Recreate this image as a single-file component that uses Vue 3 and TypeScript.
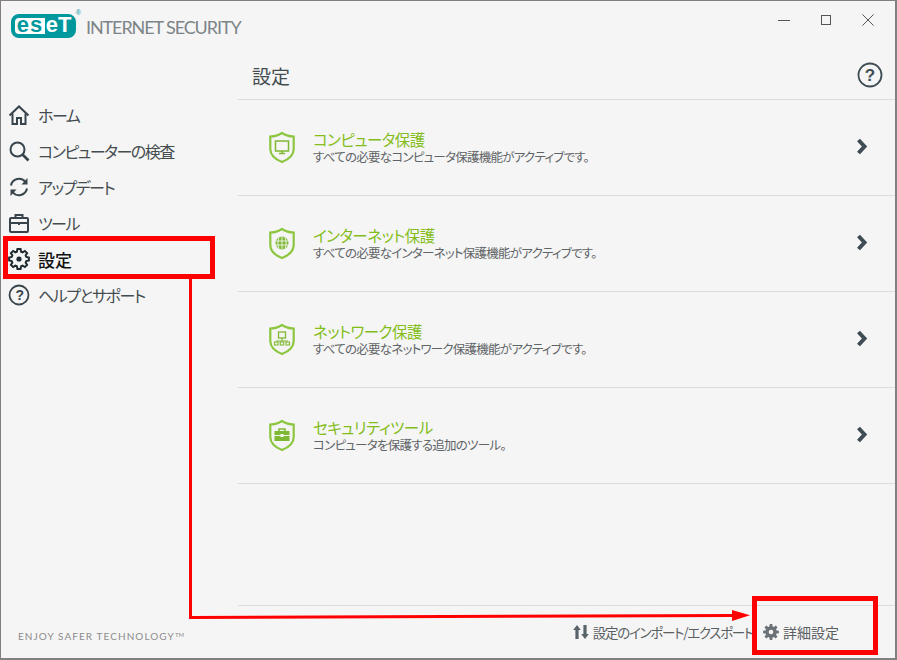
<script setup lang="ts">
function gearPath(cx: number, cy: number, ro: number, ri: number, n: number): string {
  const pts: string[] = []
  const step = (Math.PI * 2) / n
  for (let i = 0; i < n; i++) {
    const a = i * step - Math.PI / 2
    const list: [number, number][] = [
      [ri, a - step * 0.36],
      [ro, a - step * 0.2],
      [ro, a + step * 0.2],
      [ri, a + step * 0.36],
    ]
    for (const [r, t] of list) {
      pts.push(`${(cx + r * Math.cos(t)).toFixed(2)} ${(cy + r * Math.sin(t)).toFixed(2)}`)
    }
  }
  return 'M' + pts.join('L') + 'Z'
}
const navGear = gearPath(11, 11, 10, 7.6, 8)
const footGear = gearPath(8, 8, 8, 5.8, 8)

const nav = [
  { id: 'home', label: 'ホーム' },
  { id: 'scan', label: 'コンピューターの検査' },
  { id: 'update', label: 'アップデート' },
  { id: 'tools', label: 'ツール' },
  { id: 'setup', label: '設定', active: true },
  { id: 'help', label: 'ヘルプとサポート' },
]
const rows = [
  { id: 'pc', title: 'コンピュータ保護', sub: 'すべての必要なコンピュータ保護機能がアクティブです。' },
  { id: 'net', title: 'インターネット保護', sub: 'すべての必要なインターネット保護機能がアクティブです。' },
  { id: 'lan', title: 'ネットワーク保護', sub: 'すべての必要なネットワーク保護機能がアクティブです。' },
  { id: 'tool', title: 'セキュリティツール', sub: 'コンピュータを保護する追加のツール。' },
]
</script>

<template>
  <div class="win">
    <header class="bar">
      <div class="logo">
        <span class="pill"><span class="es">es</span><span class="et">eT</span></span>
        <span class="reg">®</span>
      </div>
      <span class="prod">INTERNET SECURITY</span>
      <div class="ctrls">
        <svg width="12" height="12" viewBox="0 0 12 12"><path d="M0 6.5H12" stroke="#555" /></svg>
        <svg width="12" height="12" viewBox="0 0 12 12"><rect x="1.5" y="1.5" width="9" height="9" fill="none" stroke="#555" /></svg>
        <svg width="12" height="12" viewBox="0 0 12 12"><path d="M.5 .5L11.5 11.5M11.5 .5L.5 11.5" stroke="#555" /></svg>
      </div>
    </header>
    <div class="body">
      <aside class="side">
        <nav class="nav">
          <div v-for="n in nav" :key="n.id" class="item" :class="{ active: n.active }">
            <svg class="ico" width="22" height="22" viewBox="0 0 22 22" fill="none" stroke="#38444b" stroke-width="2">
              <template v-if="n.id === 'home'">
                <path d="M1.5 11.5L11 2.5L20.5 11.5" />
                <path d="M4.5 9.5V20H9V14H13V20H17.5V9.5" />
              </template>
              <template v-else-if="n.id === 'scan'">
                <circle cx="9.5" cy="9.5" r="7" />
                <path d="M14.5 14.5L20.5 20.5" stroke-width="2.6" />
              </template>
              <template v-else-if="n.id === 'update'">
                <path d="M3 9.5A8.2 8.2 0 0 1 17.5 6" />
                <path d="M19 12.5A8.2 8.2 0 0 1 4.5 16" />
                <path d="M19.5 2V8.5H13.5Z" fill="#38444b" stroke="none" />
                <path d="M2.5 20V13.5H8.500Z" fill="#38444b" stroke="none" />
              </template>
              <template v-else-if="n.id === 'tools'">
                <rect x="2" y="6" width="18" height="14" rx="1" />
                <path d="M7.500 6V3H14.500V6M2 11H20" />
                <path d="M11 10V13" />
              </template>
              <template v-else-if="n.id === 'setup'">
                <path :d="navGear" stroke="#1f2a30" />
                <circle cx="11" cy="11" r="2.600" fill="#1f2a30" stroke="none" />
              </template>
              <template v-else>
                <circle cx="11" cy="11" r="9.500" stroke-width="1.800" />
                <text x="11" y="16" text-anchor="middle" class="q" font-size="14" stroke="none" fill="#38444b">?</text>
              </template>
            </svg>
            <span>{{ n.label }}</span>
          </div>
        </nav>
        <div class="slogan">ENJOY SAFER TECHNOLOGY<sup>TM</sup></div>
      </aside>
      <main class="main">
        <div class="head">
          <h1>設定</h1>
          <svg width="26" height="26" viewBox="0 0 26 26" fill="none">
            <circle cx="13" cy="13" r="11.500" stroke="#3f4c54" stroke-width="1.800" />
            <text x="13" y="19" text-anchor="middle" class="q" font-size="17" font-weight="700" fill="#3f4c54">?</text>
          </svg>
        </div>
        <div class="list">
          <div v-for="r in rows" :key="r.id" class="row">
            <svg class="shield" width="28" height="33" viewBox="0 0 28 33" fill="none">
              <path d="M14 2C10.500 4.300 6 5.500 2.300 5.500V18C2.300 25 9 29 14 31C19 29 25.700 25 25.700 18V5.500C22 5.500 17.500 4.300 14 2Z" stroke="#8cc63f" stroke-width="2.200" />
              <template v-if="r.id === 'pc'">
                <rect x="7.500" y="10" width="13" height="10" stroke="#7fb832" stroke-width="1.500" />
                <path d="M11 22.500H17M14 20V22.500" stroke="#7fb832" stroke-width="1.500" />
              </template>
              <template v-else-if="r.id === 'net'">
                <circle cx="14" cy="16" r="6.500" fill="#7fb832" />
                <path d="M7.500 14H20.500M7.500 18H20.500M14 9.500V22.500M11 10.500C9.500 14 9.500 18 11 21.500M17 10.500C18.500 14 18.500 18 17 21.500" stroke="#f5f5f5" stroke-width=".9" />
              </template>
              <template v-else-if="r.id === 'lan'">
                <rect x="10.500" y="9" width="7" height="6" stroke="#7fb832" stroke-width="1.300" />
                <path d="M14 15V18M8 18H20" stroke="#7fb832" stroke-width="1.200" />
                <rect x="6.500" y="19" width="3.500" height="3" stroke="#7fb832" stroke-width="1.100" />
                <rect x="12.200" y="19" width="3.500" height="3" stroke="#7fb832" stroke-width="1.100" />
                <rect x="18" y="19" width="3.500" height="3" stroke="#7fb832" stroke-width="1.100" />
              </template>
              <template v-else>
                <path d="M11 12V10H17V12" stroke="#7fb832" stroke-width="1.500" />
                <rect x="6.500" y="12" width="15" height="4" fill="#7fb832" />
                <rect x="6.500" y="17" width="15" height="5" fill="#7fb832" />
                <rect x="12.500" y="15" width="3" height="3" fill="#f5f5f5" />
              </template>
            </svg>
            <div class="txt">
              <div class="title">{{ r.title }}</div>
              <div class="sub">{{ r.sub }}</div>
            </div>
            <svg class="chev" width="14" height="19" viewBox="0 0 14 19" fill="none">
              <path d="M3.500 3L9.500 9.500L3.500 16" stroke="#3f4c54" stroke-width="4" />
            </svg>
          </div>
        </div>
        <footer class="foot">
          <span class="act imp">
            <svg width="16" height="16" viewBox="0 0 16 16" fill="#59636a">
              <path d="M4 1L7.800 6H5.600V15H2.400V6H.2Z" />
              <path d="M12 15L8.200 10H10.400V1H13.600V10H15.800Z" />
            </svg>
            <span class="imp-label">設定のインポート/エクスポート</span>
          </span>
          <span class="act">
            <svg width="16" height="16" viewBox="0 0 16 16">
              <path :d="footGear" fill="#6a7277" fill-rule="evenodd" />
              <circle cx="8" cy="8" r="2.300" fill="#f5f5f5" />
            </svg>
            詳細設定
          </span>
        </footer>
      </main>
    </div>
    <div class="mark m1"></div>
    <div class="mark m2"></div>
    <svg class="arrow" width="897" height="660" viewBox="0 0 897 660" fill="none">
      <path d="M190.500 279V617.500L733 615.500" stroke="#f00" stroke-width="3" />
      <path d="M732 610L750 615.300L732 621Z" fill="#f00" />
    </svg>
  </div>
</template>

<style scoped>
.win {
  position: relative;
  width: 897px;
  height: 660px;
  box-sizing: border-box;
  border: 1px solid #808080;
  border-width: 1px 2px 2px 1px;
  background: #f5f5f5;
  display: flex;
  flex-direction: column;
  overflow: hidden;
  font-family: "Noto Sans CJK JP", "Noto Sans", sans-serif;
  font-feature-settings: "palt";
  color: #444;
}
.bar {
  height: 39px;
  display: flex;
  align-items: flex-start;
  flex: none;
}
.logo {
  position: relative;
  margin: 13px 0 0 10px;
  width: 65px;
  height: 24px;
}
.pill {
  display: flex;
  align-items: stretch;
  width: 65px;
  height: 24px;
  box-sizing: border-box;
  border: 4px solid #00979d;
  border-radius: 8px;
  background: #00979d;
  font-family: "Liberation Sans", sans-serif;
  font-weight: 700;
  font-size: 22px;
  line-height: 14px;
  font-feature-settings: normal;
}
.es {
  width: 30px;
  background: #fff;
  color: #00979d;
  text-align: center;
  border-radius: 4px 0 0 4px;
  letter-spacing: 1px;
}
.et {
  width: 27px;
  color: #fff;
  text-align: center;
  letter-spacing: 0;
}
.reg {
  position: absolute;
  top: -5px;
  right: -5px;
  font-size: 7px;
  line-height: 8px;
  color: #00979d;
  font-family: "Liberation Sans", sans-serif;
}
.prod {
  margin: 15px 0 0 10px;
  font-family: Lato, sans-serif;
  font-size: 18px;
  line-height: 22px;
  letter-spacing: -1.1px;
  color: #7c8488;
  font-feature-settings: normal;
}
.ctrls {
  margin: 13px 0 0 auto;
  padding-right: 21px;
  display: flex;
  gap: 30px;
}
.body {
  flex: 1;
  display: flex;
  min-height: 0;
}
.side {
  width: 237px;
  flex: none;
  display: flex;
  flex-direction: column;
  padding-top: 57px;
  box-sizing: border-box;
}
.nav {
  flex: 1;
}
.item {
  height: 36px;
  display: flex;
  align-items: center;
  gap: 8px;
  padding-left: 7px;
  font-size: 16px;
  letter-spacing: -1.5px;
  color: #444c50;
}
.item.active {
  color: #111;
  font-size: 17px;
  font-weight: 500;
  letter-spacing: 0;
}
.ico {
  flex: none;
}
.q {
  font-family: "Liberation Sans", sans-serif;
  font-weight: 700;
}
.slogan {
  margin: 0 0 15px 17px;
  font-family: Lato, sans-serif;
  font-size: 10px;
  line-height: 14px;
  letter-spacing: 1.07px;
  color: #8c8c8c;
  font-feature-settings: normal;
}
.slogan sup {
  font-size: 6px;
  letter-spacing: 0;
  vertical-align: 3px;
  line-height: 0;
}
.main {
  flex: 1;
  display: flex;
  flex-direction: column;
  min-width: 0;
}
.head {
  height: 60px;
  flex: none;
  box-sizing: border-box;
  border-bottom: 1px solid #dcdcdc;
  display: flex;
  align-items: flex-start;
  justify-content: space-between;
  padding: 22px 12px 0 14px;
}
.head h1 {
  margin: 0;
  font-size: 19px;
  line-height: 28px;
  font-weight: 400;
  color: #444c50;
}
.list {
  flex: 1;
}
.row {
  height: 96px;
  box-sizing: border-box;
  border-bottom: 1px solid #dcdcdc;
  display: flex;
  align-items: flex-start;
  padding: 30px 0 0 30px;
}
.shield {
  flex: none;
  margin-top: 1px;
}
.txt {
  margin-left: 17px;
  flex: 1;
}
.title {
  font-size: 15.5px;
  line-height: 18px;
  letter-spacing: -0.5px;
  color: #84bd1a;
}
.sub {
  font-size: 12.5px;
  line-height: 18px;
  letter-spacing: -0.75px;
  color: #5f6467;
}
.chev {
  flex: none;
  margin: 7px 26px 0 0;
}
.foot {
  height: 53px;
  flex: none;
  box-sizing: border-box;
  border-top: 1px solid #dcdcdc;
  display: flex;
  justify-content: flex-end;
  align-items: flex-start;
  gap: 10px;
  padding: 16px 56px 0 0;
  font-size: 14px;
  line-height: 20px;
  color: #5a5f62;
}
.act {
  display: flex;
  align-items: center;
  gap: 4px;
  white-space: nowrap;
}
.imp-label {
  font-size: 13.5px;
  letter-spacing: -1.28px;
}
.mark {
  position: absolute;
  box-sizing: border-box;
  border: 5px solid #f00;
}
.m1 {
  left: 2px;
  top: 235px;
  width: 212px;
  height: 43px;
}
.m2 {
  left: 751px;
  top: 595px;
  width: 126px;
  height: 59px;
}
.arrow {
  position: absolute;
  left: -1px;
  top: -1px;
  pointer-events: none;
}
</style>
